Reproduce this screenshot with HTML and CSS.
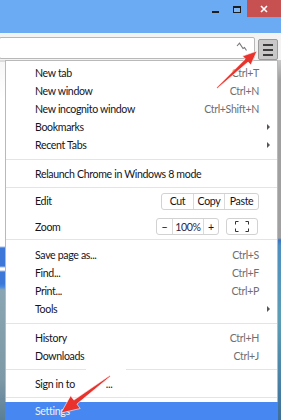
FILE: index.html
```html
<!DOCTYPE HTML>
<html>
<head>
<meta charset="UTF-8">
<title>Chrome menu</title>
<link rel="stylesheet" href="styles.css">
</head>
<body>
<div id="screen">
	<div class="titlebar">
		<span class="win-min"></span>
		<span class="win-max"></span>
		<span class="win-close">
			<svg width="8" height="8" viewBox="0 0 8 8"><path d="M1 1 L7 7 M7 1 L1 7" stroke="#fff" stroke-width="1.6"/></svg>
		</span>
	</div>
	<div class="toolbar">
		<div class="omnibox">
			<svg class="omni-icon" width="12" height="10" viewBox="0 0 12 10"><path d="M1 4 L3.5 1.2 L7 6.5 L8.5 5.5 L10.5 8.5" fill="none" stroke="#777" stroke-width="1.1"/></svg>
		</div>
		<div class="menu-btn"><span></span><span></span><span></span></div>
	</div>
	<div class="page">
		<div class="page-left"></div>
		<div class="menu">
			<div class="item">New tab<span class="key">Ctrl+T</span></div>
			<div class="item">New window<span class="key">Ctrl+N</span></div>
			<div class="item">New incognito window<span class="key">Ctrl+Shift+N</span></div>
			<div class="item">Bookmarks<span class="sub"></span></div>
			<div class="item">Recent Tabs<span class="sub"></span></div>
			<div class="sep"></div>
			<div class="item">Relaunch Chrome in Windows 8 mode</div>
			<div class="sep sep-top"></div>
			<div class="item tall">Edit
				<span class="group">
					<span class="gbtn w-cut">Cut</span><span class="gbtn w-copy">Copy</span><span class="gbtn w-paste">Paste</span>
				</span>
			</div>
			<div class="item tall zoom">Zoom
				<span class="group">
					<span class="gbtn w-minus">&minus;</span><span class="gbtn w-pct">100%</span><span class="gbtn w-plus">+</span>
				</span>
				<span class="group full">
					<svg width="14" height="11" viewBox="0 0 14 11"><path d="M0.5 3.5 V0.5 H3.5 M10.5 0.5 H13.5 V3.5 M13.5 7.5 V10.5 H10.5 M3.5 10.5 H0.5 V7.5" fill="none" stroke="#333" stroke-width="1"/></svg>
				</span>
			</div>
			<div class="sep sep-bottom"></div>
			<div class="item">Save page as...<span class="key">Ctrl+S</span></div>
			<div class="item">Find...<span class="key">Ctrl+F</span></div>
			<div class="item">Print...<span class="key">Ctrl+P</span></div>
			<div class="item">Tools<span class="sub"></span></div>
			<div class="sep"></div>
			<div class="item">History<span class="key">Ctrl+H</span></div>
			<div class="item">Downloads<span class="key">Ctrl+J</span></div>
			<div class="sep sep-sign"></div>
			<div class="item">Sign in to<span class="erased">...</span></div>
			<div class="sep sep-last"></div>
			<div class="item active">Settings</div>
		</div>
		<div class="page-right"></div>
	</div>
	<svg class="marks" width="281" height="420" viewBox="0 0 281 420">
		<rect x="86" y="340" width="40" height="32" fill="#fff"/>
		<polygon points="216.7,87.6 245.3,59 242.6,56.1 257,51 250.8,64.9 248.1,62 217.3,88.4" fill="#e8322b" stroke="#fff" stroke-width="0.6"/>
		<polygon points="109.7,375.6 73.9,400.1 70.6,395.7 61,413 80.2,408.5 76.9,404.1 110.3,376.4" fill="#e8322b" stroke="#fff" stroke-width="0.6"/>
	</svg>
</div>
</body>
</html>
```

FILE: styles.css
```css
body {margin:0;}
#screen {position:relative; width:281px; height:420px; overflow:hidden; font-family:Lato, "Noto Sans", sans-serif; font-size:10.6px; letter-spacing:-0.35px; color:#15131d; background:#fff;}

.titlebar {height:33px; background:#6aabf4; display:flex; justify-content:flex-end; align-items:flex-start;}
.win-min {width:7px; height:2px; margin-top:11px; background:#1e1e1e;}
.win-max {width:6px; height:4px; margin:6px 0 0 14px; border:1px solid #1e1e1e; border-top-width:2px; background:#7fb6f4;}
.win-close {width:34px; height:17px; margin-left:6px; background:#c75050; display:flex; align-items:center; justify-content:center;}

.toolbar {height:27px; box-sizing:border-box; padding-top:4px; background:#f3f3f3; display:flex; align-items:flex-start;}
.omnibox {width:254px; height:20px; margin-left:-1px; border:1px solid #b8b8b8; border-radius:2px; background:#fff; display:flex; justify-content:flex-end; align-items:center;}
.omni-icon {margin-right:6px; margin-top:-3px;}
.menu-btn {width:18px; height:19px; margin:2px 0 0 3px; border:1px solid #9a9a9a; border-radius:2px; background:#c8c8c8; display:flex; flex-direction:column; align-items:center; justify-content:center; gap:3px;}
.menu-btn span {width:10px; height:2px; background:#3c3c3c;}

.page {display:flex; height:360px;}
.page-left {width:5px; background:linear-gradient(#dcdcdc 0, #dcdcdc 2px, #f7f7f7 2px, #fff 40px, #fff 186px, #3d78d8 188px, #3d78d8 206px, #fff 208px, #fff 210px, #3d78d8 212px, #3d78d8 224px, #4a8ae0 227px, #8aa6b2 230px, #7d98a6 320px, #5a7f96 360px);}
.page-right {width:3px; background:linear-gradient(#c8c8c8 0, #a0a0a0 20px, #a0a0a0 178px, #3b74c0 180px, #4f8fc0 186px, #5c9db5 260px, #3e6f9a 360px);}
.menu {width:271px; border:1px solid #b9b9b9; border-bottom:0; background:#fff; padding-top:3px;}

.item {height:18px; display:flex; align-items:center; padding:0 18px 0 29px; white-space:nowrap;}
.key {margin-left:auto; color:#6f6f6f;}
.sub {margin-left:auto; margin-right:-11px; width:0; height:0; border-top:3px solid transparent; border-bottom:3px solid transparent; border-left:3px solid #555;}
.sep {height:1px; background:#e4e4e4; margin:5px 0;}
.sep-top {margin:4px 0 0;}
.sep-bottom {margin:0 0 6px;}
.sep-sign {margin:4px 0 5px;}
.sep-last {margin:4px 0 4px;}
.tall {height:26px;}
.zoom {height:25px;}

.group {display:flex; height:15px; border:1px solid #d2d2d2; border-radius:3px; margin-left:auto;}
.zoom .full {margin-left:7px; width:30px; justify-content:center; align-items:center; margin-right:1px;}
.gbtn {display:flex; align-items:center; justify-content:center; border-left:1px solid #dadada;}
.gbtn:first-child {border-left:0;}
.w-cut {width:31px;}
.w-copy {width:30px;}
.w-paste {width:33px;}
.w-minus {width:15px;}
.w-pct {width:30px; color:#2d2446;}
.w-plus {width:14px;}

.erased {margin-left:31px;}
.active {background:#4787f1; color:#eef2fb; margin:0 -1px; padding-left:30px;}

.marks {position:absolute; left:0; top:0; pointer-events:none;}
```
